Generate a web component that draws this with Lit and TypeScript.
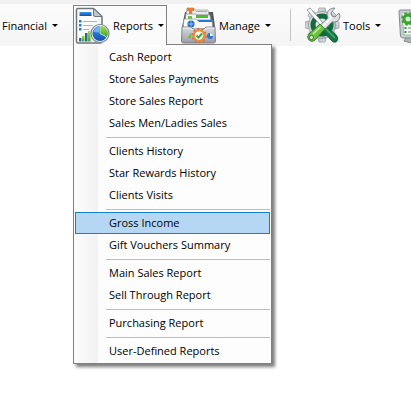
import { LitElement, html, svg, css, nothing } from "lit";
import { customElement, property, state } from "lit/decorators.js";
import { classMap } from "lit/directives/class-map.js";

const reportIcon = html`<svg class="icon" width="36" height="38" viewBox="0 0 36 38" aria-hidden="true">
  <defs>
    <linearGradient id="pg" x1="0" y1="0" x2="1" y2="1"><stop offset="0.4" stop-color="#fff" /><stop offset="1" stop-color="#dfe3e6" /></linearGradient>
    <linearGradient id="bl" x1="0" y1="0" x2="0" y2="1"><stop offset="0" stop-color="#3f95e8" /><stop offset="1" stop-color="#1250b0" /></linearGradient>
    <linearGradient id="gr" x1="0" y1="0" x2="0" y2="1"><stop offset="0" stop-color="#9be04a" /><stop offset="1" stop-color="#45a325" /></linearGradient>
  </defs>
  <path d="M3 1.500H18.500L27 9.500V34.500Q27 36 25.500 36H3Q1.500 36 1.500 34.500V3Q1.500 1.500 3 1.500Z" fill="url(#pg)" stroke="#70757a" stroke-width="1.500" />
  <path d="M18.500 1.500V8Q18.500 9.500 20 9.500H27Z" fill="#c4c8cb" stroke="#70757a" stroke-width="1" />
  <rect x="4.500" y="5" width="12" height="4" fill="url(#bl)" />
  <g fill="#2a7bd4"><rect x="4" y="13" width="2.500" height="2.500" /><rect x="4" y="17" width="2.500" height="2.500" /><rect x="4" y="21" width="2.500" height="2.500" /></g>
  <path d="M8 14.500H22M8 18.500H18M8 22.500H14" stroke="#b0b4b8" stroke-width="1" />
  <rect x="4" y="31" width="2.500" height="3.500" fill="#2763bd" />
  <rect x="7" y="29" width="2.500" height="5.500" fill="url(#gr)" />
  <rect x="10" y="26" width="2.500" height="8.500" fill="#2763bd" />
  <rect x="13" y="24" width="2.500" height="10.500" fill="url(#gr)" />
  <circle cx="25" cy="26.500" r="9" fill="#f2f4f6" stroke="#7e878e" stroke-width="1.200" />
  <circle cx="25" cy="26.500" r="7.600" fill="url(#bl)" />
  <path d="M25 26.500V18.900A7.600 7.600 0 0 1 31.600 30.300Z" fill="url(#gr)" />
  <path d="M18.500 25Q19.500 20.500 24 20V25.500Z" fill="#8cc8f6" opacity=".7" />
  <path d="M25 19V26.500L31.500 30" fill="none" stroke="#e9f3f7" stroke-width=".7" />
</svg>`;

const manageIcon = html`<svg class="icon" width="36" height="38" viewBox="0 0 36 38" aria-hidden="true">
  <defs>
    <linearGradient id="dr" x1="0" y1="0" x2="0" y2="1"><stop offset="0" stop-color="#d9dbe2" /><stop offset="1" stop-color="#9a9ca6" /></linearGradient>
  </defs>
  <path d="M4 5L1 20V34H34V20L32 5Z" fill="#55575e" />
  <path d="M6 1H13L14 3H27L28 8H5Z" fill="#e9ebec" stroke="#9a9a9a" stroke-width=".7" />
  <path d="M6 1H13V4H6ZM8 4H11V7H8Z" fill="#ec7a35" />
  <path d="M15 4H26V5H15Z" fill="#ef9a5c" />
  <path d="M5 7H14L15 8H29L30 14H4Z" fill="#f3f5f1" stroke="#8d9192" stroke-width=".7" />
  <path d="M15 8H27V11H15Z" fill="#4fbb35" /><path d="M7 9H11V12H7Z" fill="#6cc54e" />
  <path d="M3 12H15L17 13H31L32 22H2Z" fill="#f7f9fc" stroke="#8e95a2" stroke-width=".7" />
  <path d="M16 13H31V15H18Z" fill="#2c78cf" />
  <circle cx="10" cy="17" r="3.600" fill="#226bc1" />
  <path d="M6.500 17H13.500M10 13.500V20.500" stroke="#a3cef4" stroke-width=".8" />
  <path d="M1 20H10L12 22H23L25 20H34L34.500 34Q34.500 36 32.500 36H2.500Q.5 36 .5 34Z" fill="url(#dr)" stroke="#6c6d75" stroke-width=".8" />
  <path d="M1.500 21H9.500L11.500 23H23.500L25.500 21H33.500" fill="none" stroke="#f6f6f9" stroke-width=".9" />
  <path d="M4 31L7 28V31Z" fill="#e9c545" /><path d="M6 31L10 26V31Z" fill="#7ab94d" />
  <circle cx="29" cy="29" r="3" fill="#2f77cb" /><path d="M29 29V26A3 3 0 0 1 32 29Z" fill="#eef1f5" />
  <circle cx="18" cy="28.500" r="6.700" fill="none" stroke="#df762c" stroke-width="2" stroke-dasharray="2.400 1.800" />
  <circle cx="18" cy="28.500" r="5.200" fill="#f8f8f0" stroke="#e88a3d" stroke-width="2" />
  <path d="M15.500 28.500L17.500 30.500L21 26.500" fill="none" stroke="#3da63b" stroke-width="1.900" />
</svg>`;

const toolsIcon = html`<svg class="icon" width="36" height="38" viewBox="0 0 36 38" aria-hidden="true">
  <defs>
    <linearGradient id="mt" x1="0" y1="0" x2="1" y2="1"><stop offset="0" stop-color="#e5e8ea" /><stop offset="1" stop-color="#b2b8bb" /></linearGradient>
  </defs>
  <g stroke="#8d9599" stroke-width=".7" fill="url(#mt)">
    ${[0, 45, 90, 135, 180, 225, 270, 315].map(
      (a) => svg`<path transform="rotate(${a} 17 18)" d="M13 5L14 1H20L21 5Z" />`,
    )}
    <circle cx="17" cy="18" r="13.500" />
  </g>
  <circle cx="17" cy="18" r="9" fill="#dfe8e2" stroke="#14693e" stroke-width="5" />
  <path d="M2 3L5 1L19 17L17 20Z" fill="#fafafa" stroke="#7b8388" stroke-width=".8" />
  <path d="M17 23L21 19L32 29Q34 33 31 35Q28 36 26 33Z" fill="#157a49" stroke="#07522f" stroke-width=".8" />
  <path d="M21 22L30 31" stroke="#4aab71" stroke-width="1.400" />
  <path d="M30 1Q24 1 22 6Q22 9 23 11L14 19L19 23L27 15Q34 16 35 9L34 6L30 10L27 9L26 6Z" fill="#dfe2e5" stroke="#777e83" stroke-width=".9" />
  <path d="M25 8L26 11L17 20" fill="none" stroke="#fff" stroke-width="1.500" />
  <path d="M15 17L20 22L10 33Q7 36 4 33Q1 30 4 27Z" fill="#6cc043" stroke="#33752b" stroke-width=".9" />
  <path d="M15.500 20L8 27" stroke="#c3ec98" stroke-width="1.700" />
  <circle cx="6.500" cy="30.500" r="2" fill="#edf5e7" stroke="#367c2d" />
</svg>`;

const monitorIcon = html`<svg class="icon" width="36" height="38" viewBox="0 0 36 38" aria-hidden="true">
  <path d="M9 29H24L28 35Q18 38 6 34Z" fill="#b0b5b8" stroke="#7e878b" />
  <path d="M2 3H34V31H5Q3 31 2.500 29L1 5Q1 3 2 3Z" fill="#c9ced0" stroke="#7f898c" />
  <path d="M4 6H31V28H6Z" fill="#f5faf4" stroke="#a5b3a9" />
  <path d="M4 6H31V18H5Z" fill="#d5efca" />
  <circle cx="10" cy="12" r="4" fill="none" stroke="#39a336" stroke-width="3" />
  <circle cx="10" cy="12" r="5.800" fill="none" stroke="#39a336" stroke-width="2" stroke-dasharray="2.500 2.100" />
  <path d="M6.500 21H8.500M6.500 25H8.500" stroke="#34993b" stroke-width="2" /><path d="M10 21H27M10 25H27" stroke="#9daaa1" stroke-width="1.500" />
</svg>`;

@customElement("tool-button")
class ToolButton extends LitElement {
  @property() label = "";
  @property({ attribute: false }) icon: unknown = nothing;
  @property({ type: Boolean }) open = false;

  static styles = css`
    :host { display: block; flex: none; }
    button {
      display: flex;
      align-items: center;
      gap: 2px;
      box-sizing: border-box;
      height: 40px;
      margin: 0;
      padding: 0 2px 0 1px;
      border: 1px solid transparent;
      border-bottom: 0;
      background: none;
      color: #000;
      font: 11px/22px "Open Sans", "Noto Sans", sans-serif;
      white-space: nowrap;
    }
    button.open { border-color: #808080; background: #fbfbfb; }
    .icon { display: block; flex: none; }
    .arrow {
      margin-left: 3px;
      border: 3px solid transparent;
      border-top-color: #000;
      border-bottom: 0;
    }
  `;

  render() {
    return html`<button
      class=${classMap({ open: this.open })}
      aria-label=${this.label || "Display"}
      aria-haspopup="menu"
      aria-expanded=${this.open ? "true" : "false"}
    >
      ${this.icon}${this.label ? html`<span>${this.label}</span><span class="arrow"></span>` : nothing}
    </button>`;
  }
}

@customElement("drop-menu")
class DropMenu extends LitElement {
  @property({ attribute: false }) groups: string[][] = [];
  @state() private current = "Gross Income";

  static styles = css`
    :host {
      display: block;
      box-sizing: border-box;
      width: 199px;
      padding: 1px;
      border: 1px solid #808080;
      background: linear-gradient(90deg, #fcfcfc, #f2f2f2 24px, #fdfdfd 24px);
      box-shadow: 3px 3px 3px #00000080;
    }
    .group { margin: 0; padding: 0; list-style: none; }
    .group + .group::before {
      content: "";
      display: block;
      height: 1px;
      margin: 3px 0 2px 31px;
      background: #bdbdbd;
    }
    button {
      display: block;
      box-sizing: border-box;
      width: 100%;
      height: 22px;
      margin: 0;
      padding: 0 0 0 33px;
      border: 1px solid transparent;
      background: none;
      color: #000;
      font: 11px/20px "Open Sans", "Noto Sans", sans-serif;
      text-align: left;
      white-space: nowrap;
    }
    .current { border-color: #1681c7; background: #b5d7f3; }
  `;

  render() {
    return this.groups.map(
      (group) => html`<ul class="group" role="menu">
        ${group.map(
          (name) => html`<li role="none"><button
            role="menuitem"
            class=${classMap({ current: name === this.current })}
            @mouseenter=${() => (this.current = name)}
          >${name}</button></li>`,
        )}
      </ul>`,
    );
  }
}

@customElement("app-root")
class AppRoot extends LitElement {
  private groups = [
    ["Cash Report", "Store Sales Payments", "Store Sales Report", "Sales Men/Ladies Sales"],
    ["Clients History", "Star Rewards History", "Clients Visits"],
    ["Gross Income", "Gift Vouchers Summary"],
    ["Main Sales Report", "Sell Through Report"],
    ["Purchasing Report"],
    ["User-Defined Reports"],
  ];

  static styles = css`
    :host { display: block; min-height: 100vh; background: #fff; overflow-x: clip; }
    .toolbar {
      display: flex;
      box-sizing: border-box;
      height: 46px;
      padding-top: 1px;
      border-top: 4px solid #f1f1f1;
      background: linear-gradient(#fcfcfc, #f5f5f5);
    }
    .entry { position: relative; flex: none; margin-left: 12px; }
    .first { margin-left: 0; }
    .menu { position: absolute; z-index: 1; top: 39px; left: 0; }
    .opened { z-index: 2; }
    .opened::after {
      content: "";
      position: absolute;
      z-index: 3;
      top: 39px;
      left: 1px;
      right: 1px;
      height: 1px;
      background: #fbfbfb;
    }
    .divider { flex: none; width: 1px; height: 32px; margin: 4px 0 0 16px; background: #c3c3c3; }
  `;

  render() {
    return html`<nav class="toolbar" aria-label="Main">
      <tool-button class="entry first" label="Financial"></tool-button>
      <div class="entry opened">
        <tool-button label="Reports" open .icon=${reportIcon}></tool-button>
        <drop-menu class="menu" .groups=${this.groups}></drop-menu>
      </div>
      <tool-button class="entry" label="Manage" .icon=${manageIcon}></tool-button>
      <div class="divider"></div>
      <tool-button class="entry" label="Tools" .icon=${toolsIcon}></tool-button>
      <tool-button class="entry" .icon=${monitorIcon}></tool-button>
    </nav>`;
  }
}
